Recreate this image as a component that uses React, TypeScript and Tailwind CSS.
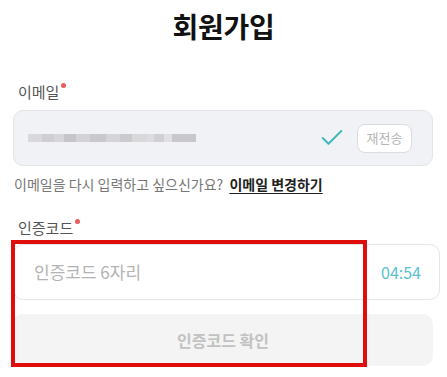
import { Check } from "lucide-react";

const font = "font-['Noto_Sans_CJK_KR',_'Noto_Sans',_sans-serif]";
const blurBlocks = [
  "bg-[#d9d9dc] w-[14px]",
  "bg-[#cfcfd3] w-[12px]",
  "bg-[#d6d6d9] w-[10px]",
  "bg-[#c6c6ca] w-[12px]",
  "bg-[#d3d3d6] w-[14px]",
  "bg-[#c9c9cd] w-[16px]",
  "bg-[#d5d5d8] w-[14px]",
  "bg-[#cbcbcf] w-[12px]",
  "bg-[#d8d8db] w-[14px]",
  "bg-[#dcdcdf] w-[8px]",
  "bg-[#d0d0d4] w-[10px]",
  "bg-[#e0e0e3] w-[8px]",
  "bg-[#c8c8cc] w-[24px]",
];

function Label({ text }: { text: string }) {
  return (
    <div className="relative inline-block pl-[5px] text-[15px] leading-[20px] text-[#555]">
      {text}
      <span className="absolute -right-[7px] top-[1px] h-[5px] w-[5px] rounded-full bg-[#e85c5c]" />
    </div>
  );
}

export default function App() {
  return (
    <div className={`${font} relative h-[377px] w-[447px] overflow-hidden bg-white px-[13px]`}>
      <h1 className="pt-[8px] text-center text-[28px] font-bold leading-[36px] tracking-[-0.3px] text-[#111]">회원가입</h1>

      <div className="mt-[35px]">
        <Label text="이메일" />
      </div>
      <div className="mt-[7px] flex h-[56px] w-[420px] items-center rounded-[10px] border border-[#e3e4e8] bg-[#f1f2f6] pl-[14px] pr-[20px]">
        <div className="flex h-[10px] items-center">
          {blurBlocks.map((cls, i) => (
            <span key={i} className={`block h-[8px] ${cls}`} />
          ))}
        </div>
        <Check className="ml-auto h-[28px] w-[28px] text-[#45b8bd]" strokeWidth={1.75} />
        <button
          type="button"
          className="ml-[11px] h-[29px] w-[55px] rounded-[8px] border border-[#dcdcdc] bg-white text-[13px] text-[#b5b5b5]"
        >
          재전송
        </button>
      </div>
      <p className="mt-[8px] pl-[1px] text-[14px] leading-[20px] text-[#777]">
        이메일을 다시 입력하고 싶으신가요?{" "}
        <span className="ml-[3px] font-bold text-[#222] underline underline-offset-[3px]">이메일 변경하기</span>
      </p>

      <div className="mt-[21px]">
        <Label text="인증코드" />
      </div>
      <div className="mt-[5px] flex h-[56px] w-[427px] items-center rounded-[10px] border border-[#e6e6e6] bg-white pl-[20px] pr-[18px]">
        <span className="text-[17px] text-[#b3b3b3]">인증코드 6자리</span>
        <span className="ml-auto text-[16px] text-[#57c2cc]">04:54</span>
      </div>
      <button
        type="button"
        className="mt-[14px] h-[52px] w-[420px] rounded-[10px] bg-[#f4f4f4] text-[16px] font-semibold text-[#c2c2c2]"
      >
        인증코드 확인
      </button>

      <div className="absolute left-[11px] top-[240px] h-[127px] w-[356px] border-[4px] border-[#e00d0d]" />
    </div>
  );
}
